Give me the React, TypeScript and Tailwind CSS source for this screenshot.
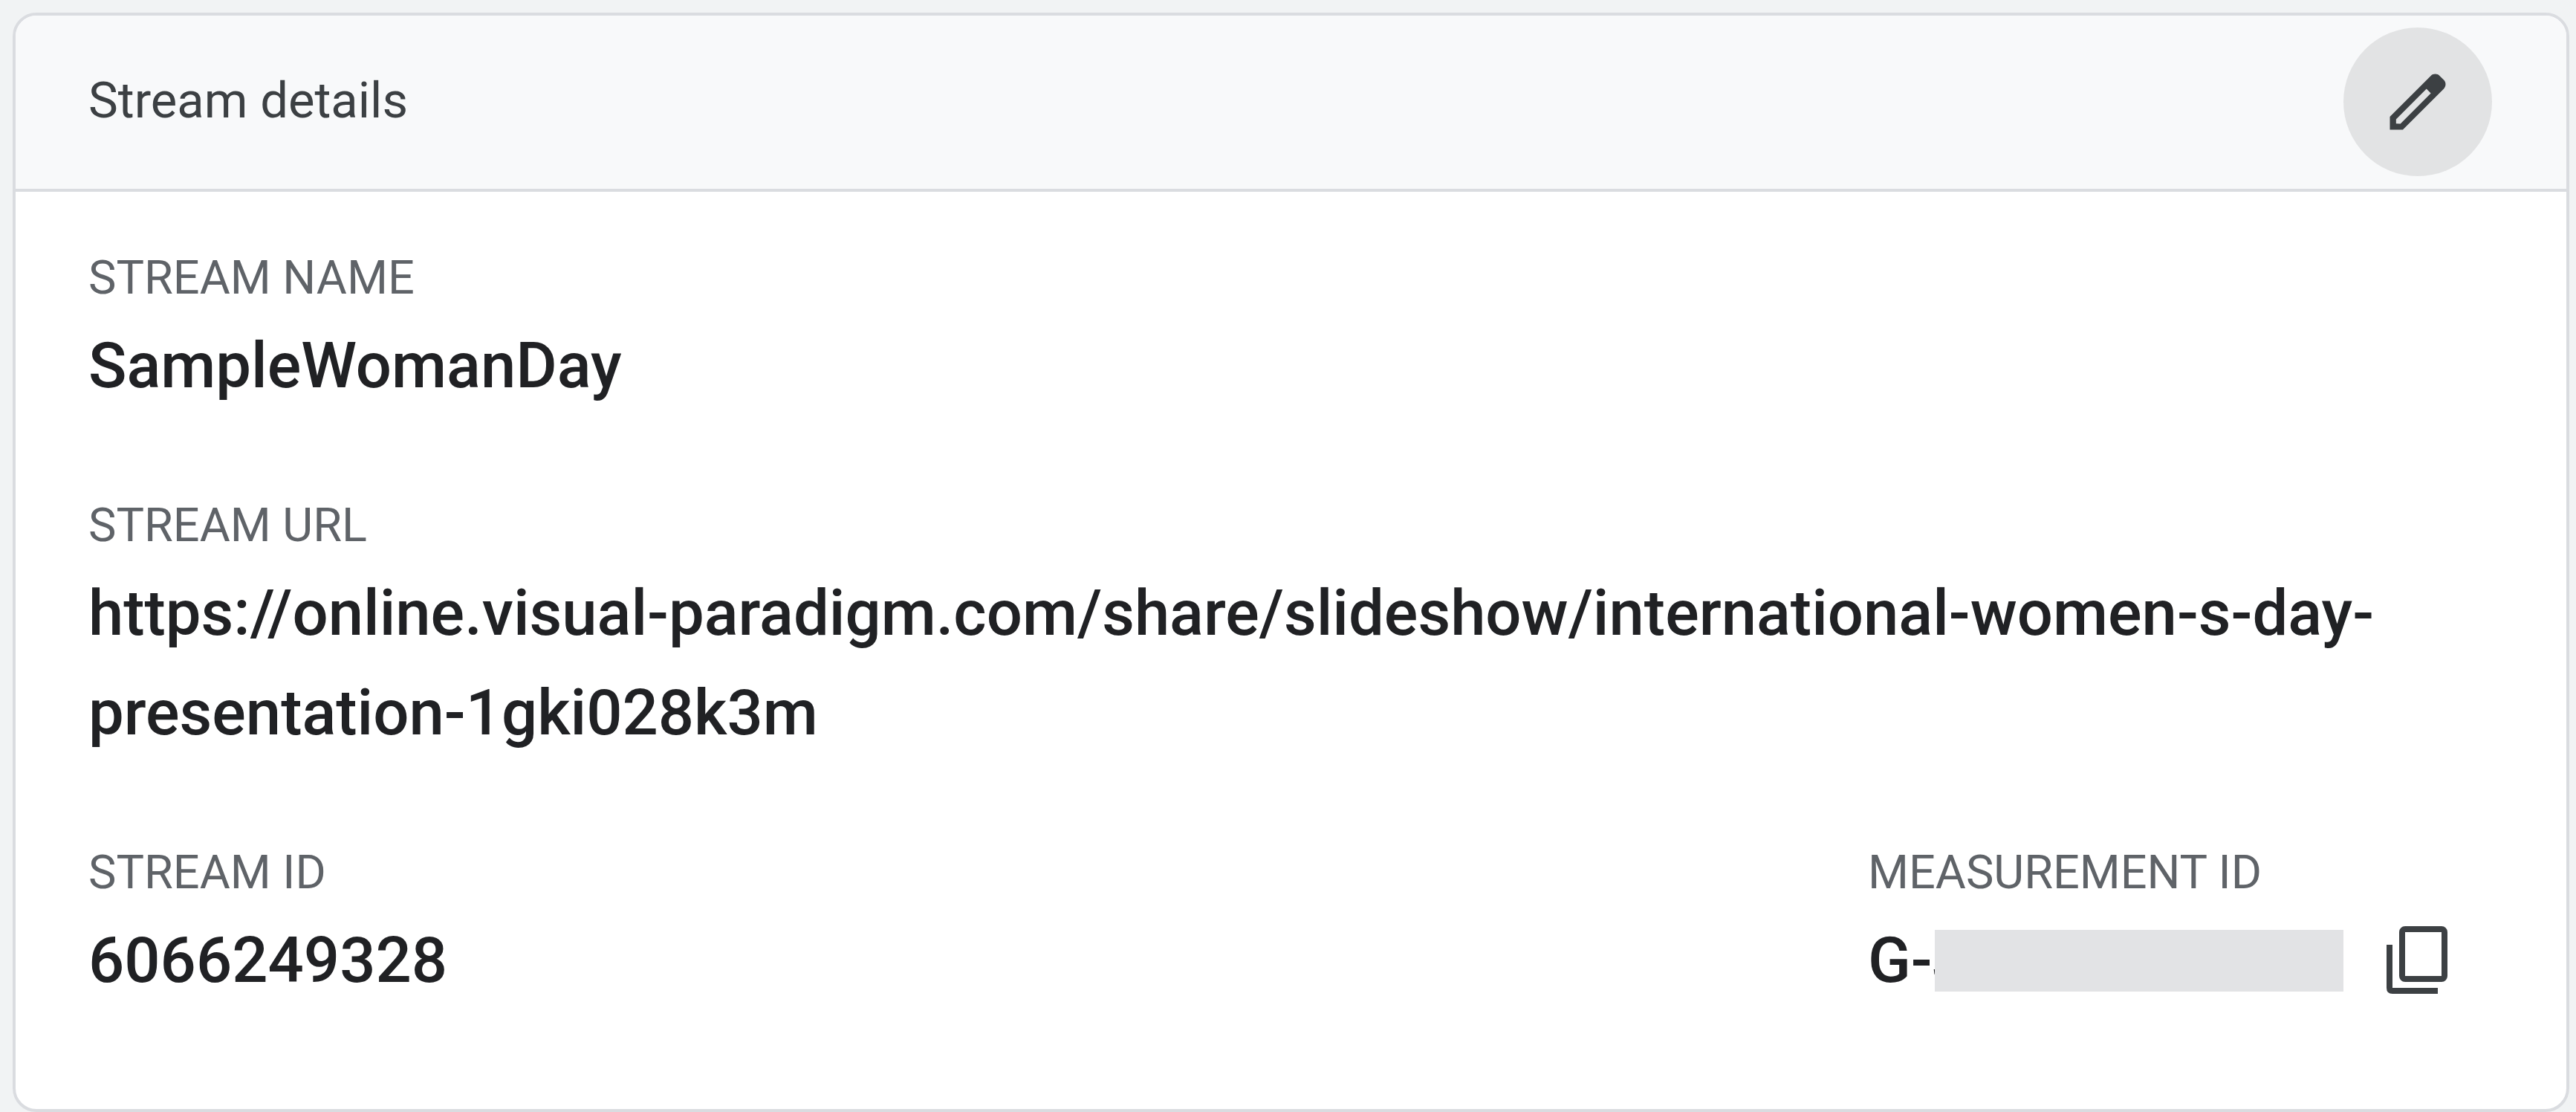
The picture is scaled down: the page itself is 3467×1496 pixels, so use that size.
interface FieldProps {
  label: string;
  value: string;
}

function Field({ label, value }: FieldProps) {
  return (
    <div>
      <dt className="text-[63px] leading-[80px] text-[#5f6368]">{label}</dt>
      <dd className="pt-[11px] text-[85px] leading-[134px] font-medium text-[#202124]">{value}</dd>
    </div>
  );
}

export default function App() {
  return (
    <main className="min-h-screen bg-[#f1f3f4] pt-[17px] pr-[9px] pl-[17px] font-['Roboto',sans-serif]">
      <section className="overflow-hidden rounded-[32px] border-4 border-[#dadce0] bg-white">
        <header className="flex items-center justify-between border-b-4 border-[#dadce0] bg-[#f8f9fa] pt-4 pr-[100px] pb-[17px] pl-[98px]">
          <h1 className="pb-1 text-[67px] leading-[80px] text-[#3c4043]">Stream details</h1>
          <button type="button" aria-label="Edit stream details" className="flex size-[200px] items-center justify-center rounded-full bg-[#e2e3e4] text-[#3c4043]">
            <svg viewBox="0 0 24 24" className="size-[100px]" fill="currentColor" aria-hidden="true">
              <path d="M20.41 4.94l-1.35-1.35c-.78-.78-2.05-.78-2.83 0L3 16.82V21h4.18L20.41 7.77c.79-.78.79-2.05 0-2.83zm-14 14.12L5 19v-1.36l9.82-9.82 1.41 1.41-9.82 9.83z" />
            </svg>
          </button>
        </header>
        <dl className="flex flex-col gap-[108px] pt-[76px] pr-[100px] pb-[133px] pl-[98px]">
          <Field label="STREAM NAME" value="SampleWomanDay" />
          <Field label="STREAM URL" value="https://online.visual-paradigm.com/share/slideshow/international-women-s-day-presentation-1gki028k3m" />
          <div className="flex justify-between">
            <Field label="STREAM ID" value="6066249328" />
            <div>
              <dt className="text-[63px] leading-[80px] text-[#5f6368]">MEASUREMENT ID</dt>
              <dd className="flex items-center pt-[11px] text-[85px] leading-[134px] font-medium text-[#202124]">
                G-J
                {/* the rest of the id stays hidden */}
                <span className="relative -ml-[44px] h-[83px] w-[550px] bg-[#e2e3e5]" />
                <button type="button" aria-label="Copy measurement ID" className="flex h-[134px] w-[200px] items-center justify-center text-[#3c4043]">
                  <svg viewBox="0 0 100 100" className="size-[100px]" fill="none" stroke="currentColor" strokeWidth="8" aria-hidden="true">
                    <rect x="29" y="8" width="57" height="67" rx="4" />
                    <path d="M12 29v58q0 4 4 4h61" />
                  </svg>
                </button>
              </dd>
            </div>
          </div>
        </dl>
      </section>
    </main>
  );
}
